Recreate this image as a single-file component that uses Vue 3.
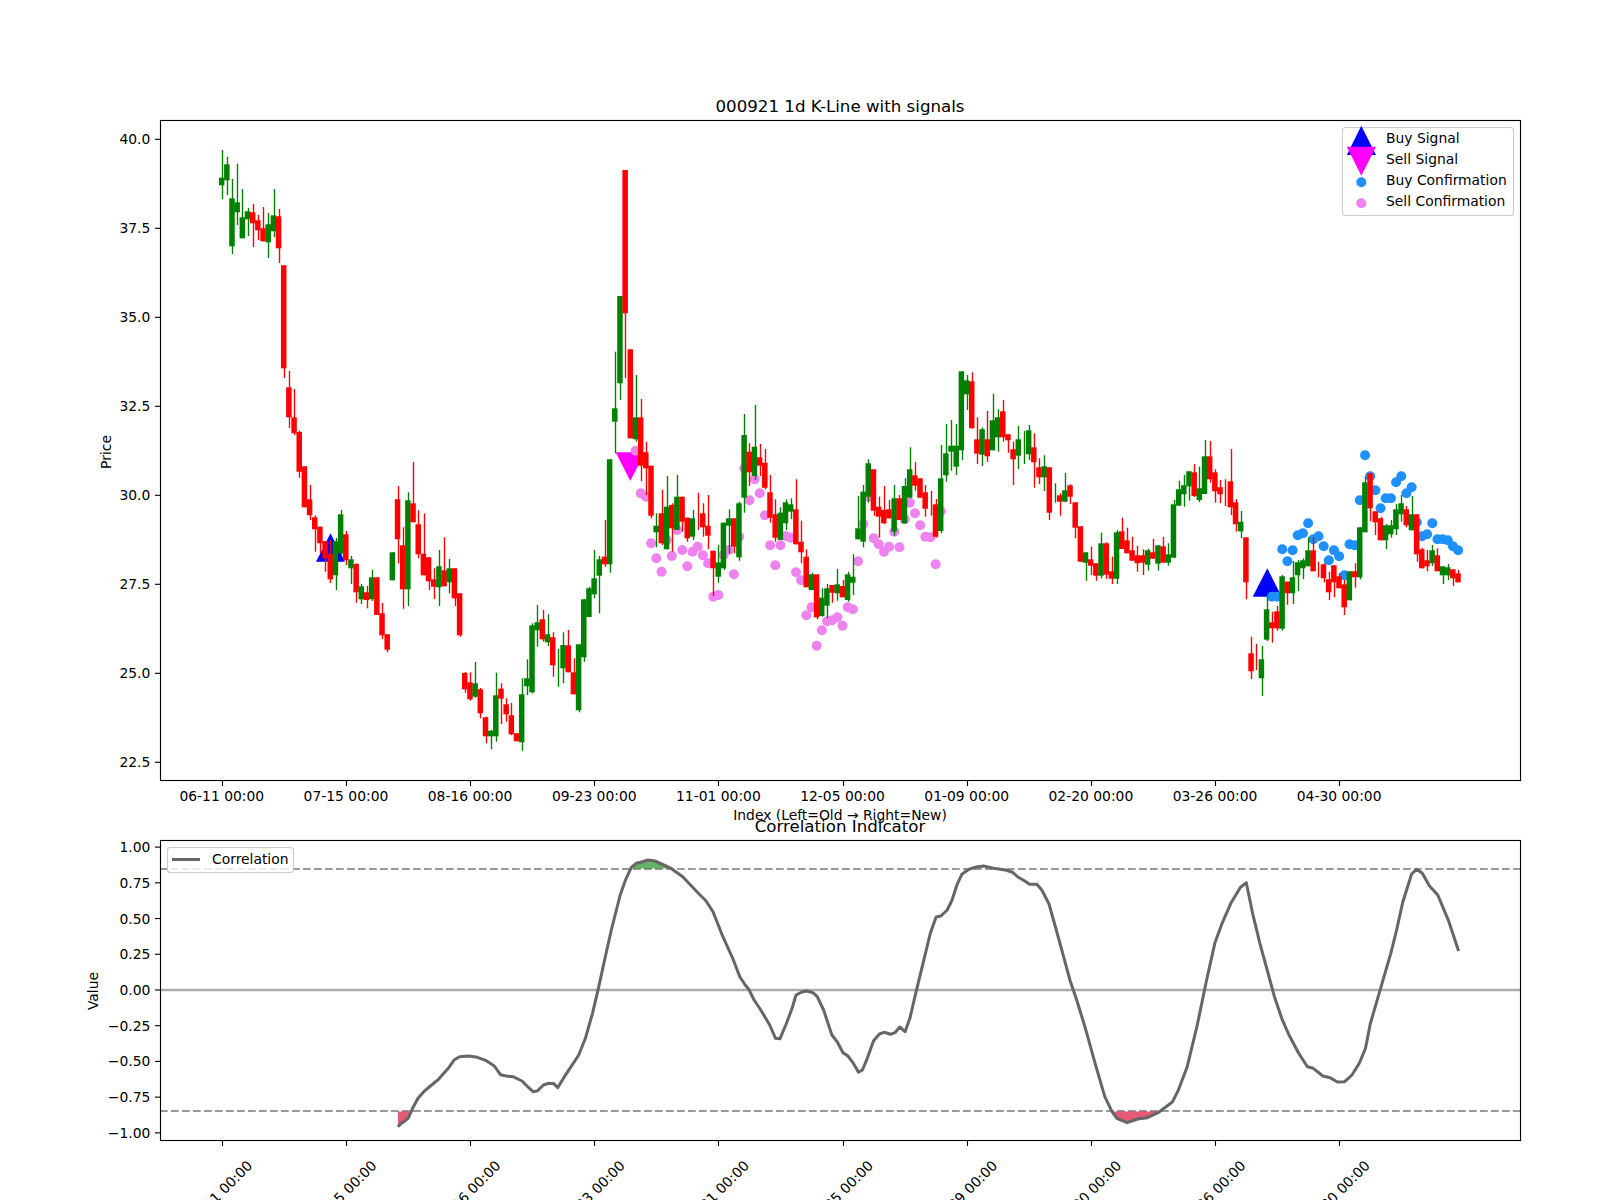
<script setup>
// price panel and indicator panel, values read as pixel rows of the 1600x1200 figure
const barX = (i) => 221.8 + 5.173 * i
const wickX = (i) => Math.round(barX(i)) + 0.5

// color, body top, body bottom, high, low (no body when top is null)
const rows = [
  ['g',177.7,185.3,150,199],['g',164.3,180.3,156.7,195],['g',198.3,246.3,179,254],['g',202.3,212.3,163.7,225],
  ['g',217.3,238.3,189,238.3],['g',211.3,219.3,208,236],['r',212.3,223.3,204,247],['r',220.3,230.3,215,240],
  ['r',228.3,241.3,207,241.3],['g',224.3,242.3,213,258],['g',215.3,231.3,189,237],['r',216.3,248.3,209,263],
  ['r',265.3,368.3,265.3,378],['r',387.3,417.3,371,428],['r',417.3,433.3,389,435],['r',432,471.7,430.7,477.7],
  ['r',466.3,507.3,466.3,507.3],['r',499.3,515.3,485,520],['r',517.3,529.3,515.3,551.7],['r',526.7,543.3,526.7,553],
  ['r',541.3,558.3,541.3,571.7],['r',554,579.3,540,583],['g',541.3,575.3,538,590],['g',514.3,553.3,510,556.7],
  ['r',534.3,560.3,531,565],['g',559.3,568.3,556,584],['r',564,592.3,563.3,602.7],['g',586.3,599.3,584,604],
  ['r',592.3,600,586,608.3],['g',577.3,599.3,570,601],['r',577.3,615,577.3,615],['r',613.3,635.3,603,639],
  ['r',634.3,649.7,634.3,652.3],['g',552.3,580.3,552.3,580.3],['r',499.3,539.3,486,563.3],['r',545.3,589.3,527.3,608.7],
  ['g',500.3,589.3,492.3,606],['r',503.3,522.3,462,522.3],['r',524.3,554.3,510.3,558.3],['r',553.7,575.3,513.3,575.3],
  ['r',557.3,581.3,557.3,590],['r',579.3,586.7,568.3,599],['g',566.3,587.3,550,606],['r',570.3,586.3,537.3,586.3],
  ['g',568.3,582.3,559,593.3],['r',568.3,598.3,568.3,606],['r',593.3,635.3,593.3,636.7],['r',673,689.3,672,692.7],
  ['r',682.3,699.3,672.3,700.7],['g',683.3,696.7,662,697.7],['r',689.3,713.3,688,718.3],['r',717.3,736.3,716.7,743.3],
  ['g',730.7,736.3,730,749.3],['g',695.3,736.3,672.7,741.7],['r',688.7,698.7,683.3,724],['r',704.3,714.3,698.3,721.7],
  ['r',715.3,734.3,703,735],['r',733.3,741.3,733.3,741.3],['g',694.3,742.3,678.3,750.7],['g',678.3,686.3,659.3,695],
  ['g',625.3,692.3,623.3,693.3],['g',622.3,630.3,605,646.7],['r',619.3,639.3,610,641.7],['g',634.3,642.3,614.3,646],
  ['r',637.3,665.3,632.3,676.7],['g',null,null,649,686.7],['g',645,668.3,632.3,683.3],['r',645.3,672.3,630,672.3],
  ['r',672.3,694.3,658.3,694.3],['g',644.3,710.3,644.3,712.3],['g',599.3,657.3,599.3,661.7],['g',588.3,617,586.7,617],
  ['g',578.3,594.3,550,598.3],['g',559.3,575.7,556,613.3],['r',556.7,564.3,520,566.7],['g',459.3,564.3,459.3,572.7],
  ['g',408.3,421.7,351.7,453.3],['g',296,383.3,296,400],['r',170,313.3,170,378.3],['r',349.3,438.3,349.3,438.3],
  ['g',417.3,439.3,375,441.7],['r',417.3,465.7,399,481],['r',452.3,468.3,442,495],['r',465.7,515.7,465.7,518.3],
  ['g',525.7,532.3,513.3,547.3],['r',513.3,543.3,490,545],['g',506.7,549.3,476,549.3],['r',505,528.3,503.3,551.7],
  ['g',496.7,530,475,530],['r',496.7,521.7,496.7,531.7],['r',517.7,538.3,517.7,541.7],['g',518.3,536.7,510,540],
  ['r',null,null,492.7,530],['r',513.3,527.3,503.3,536.7],['r',525.7,535.7,495,549],['r',550.7,568.3,550.7,596],
  ['g',562.3,576.7,545,582.7],['g',522.7,568.3,522.7,570],['g',518.3,525.7,509.3,553.3],['r',518.3,546.7,518.3,553.3],
  ['g',503.3,557.3,501.7,560.7],['g',435,497.7,414,512.7],['r',451.7,472.3,443.3,486],['g',446.7,476,405,480],
  ['r',457.3,465.7,444,476],['r',462.7,487.7,449,489.3],['r',492.3,517.7,475,522.7],['r',514.3,537.7,499.3,541.7],
  ['g',512.7,540,507.3,540],['g',502.3,523.3,499.3,530],['g',504.3,511.7,498.3,519],['r',509.3,544.3,479.3,544.3],
  ['r',541.7,552.3,520.7,563.3],['r',556.7,587.3,549.3,587.3],['g',574.3,590,572.7,590],['r',574.3,617.3,574.3,619.3],
  ['g',597.7,616,588.3,616.7],['g',588.3,605.7,584,618.3],['r',585,592.7,585,602.7],['g',584.3,593.3,569,600.7],
  ['r',586,597.3,580,597.3],['g',574.3,600,571.7,601.7],['g',576.7,582.7,554.3,595],['g',528.3,539.3,496,539.3],
  ['g',491.7,541.7,485,547.3],['g',463.3,496.7,459.3,502.7],['r',469.3,510.7,469.3,515.7],['r',506.7,516.7,496.7,537.7],
  ['r',510,523.3,486,524],['r',509.3,518.3,500,518.3],['g',498.3,531.7,485,535.7],['r',498.3,520,495,520],
  ['g',486,523.3,478.3,523.3],['g',469.3,497.7,447.3,497.7],['r',475.3,485.7,462,490.7],['r',478.3,497.7,478.3,497.7],
  ['r',492.3,508.7,485,516.7],['r',null,null,491,515.7],['r',504.3,536.7,499,537.7],['g',478.3,531,445,533.3],
  ['g',453.3,475.3,424,481.7],['g',445.7,451.7,420,470.7],['g',445.7,466.7,424,475],['g',371.3,450.3,371.3,460],
  ['g',380.3,394.3,375,410],['r',381.3,428.3,372.3,428.3],['r',439.3,453.7,417.3,464],['g',429.3,454.7,427.3,466],
  ['r',439.3,456.3,411,462],['g',420.3,450.3,394,450.3],['g',417.3,437.3,409.3,451.7],['r',411.3,437.3,400,441.7],
  ['r',434.3,440.3,434.3,452.7],['r',449.3,459.3,441.7,485],['g',439.3,455.7,426,469],['g',null,null,431,464],
  ['g',430.3,454.3,425,460],['r',447.3,462.3,433.3,487.7],['r',467.3,477.3,458.3,484],['g',466.3,477.3,455.3,491],
  ['r',467.3,512.7,467.3,520],['g',null,null,483.3,502.7],['r',495.3,501.7,493.3,515.7],['g',490.3,501.7,473,501.7],
  ['r',485.3,496.7,484.3,504],['r',502.3,527.7,502.3,538.3],['r',526.3,561.7,526.3,561.7],['g',552.3,562.7,552.3,580.7],
  ['r',559.3,565.7,546.7,575],['r',563.3,575.7,563.3,580.7],['g',543.3,575.7,532.7,578.3],['r',543.3,574.7,542.3,579],
  ['r',571.3,578.7,556.7,584],['g',532.3,578.7,530,584],['r',531.3,549,517.7,549],['r',540.3,553.3,527.7,553.3],
  ['r',550.3,560.7,536.7,560.7],['r',555.3,563.3,546,571.7],['r',555.3,562.7,549.3,575],['g',550.3,564.7,548.7,570.7],
  ['r',552.3,558.7,539,558.7],['g',545.3,563.7,545.3,570.7],['r',546.3,562.7,537,562.7],['g',554.3,562.7,543.3,565.7],
  ['g',504.3,557.7,500,557.7],['g',489.3,505.7,480.7,505.7],['g',485.3,494.3,475,506.7],['g',471.3,486.3,471.3,500.7],
  ['r',472.3,496,464,497],['g',488.3,500,466.7,502],['g',456.3,494,440,494],['r',456.3,479.3,441,482.7],
  ['r',472.3,491.3,469.3,502.7],['r',487.3,494.3,480,503],['r',null,null,479.3,506],['r',481.3,507.3,449,515],
  ['r',502.3,524.3,499,531.7],['g',521.7,531.3,511,538.3],['r',537.3,582.3,537.3,599.3],['r',653.3,671.3,636.7,679],
  ['r',null,null,644,670],['g',659.3,678.3,646,696],['g',609.3,639.7,596.7,641],['r',622.3,628.3,611.7,642.7],
  ['r',611.3,628.3,606,630.7],['g',576.3,628.7,575,630.7],['r',581.7,593.3,581.7,604.7],['g',577.3,593.3,561,604],
  ['g',562.3,575.3,560,591],['g',560.3,568.3,558.3,579],['g',550.3,566.3,537.3,566.3],['r',550.3,571.3,537.3,571.3],
  ['r',null,null,561.7,577.3],['r',564.3,578.3,563.3,582.3],['r',579.3,592.3,571.7,600],['r',565.3,582.3,565.3,597.3],
  ['r',576.3,588.3,573.3,588.3],['r',584.3,607.3,580,615],['g',571.3,600.3,571.3,600.3],['r',571.3,577.3,563.3,587.7],
  ['g',527.3,577.3,527.3,579.3],['g',482.3,532.3,476.7,532.3],['r',473.3,508.3,473.3,521.3],['r',511.3,522.3,511.3,535],
  ['r',518.3,540.3,517,540.3],['g',525.3,540.3,524,549],['g',525.3,534.3,520,537.7],['g',509.3,529.3,504,535],
  ['g',503.3,514.3,495,521.7],['r',509.3,525.3,506,527.3],['g',514.3,530.3,496,530.3],['r',514.3,554.3,514.3,561.7],
  ['r',549.3,568.3,548,568.3],['r',560.3,566.3,550,571.3],['g',550.3,563.3,545,566],['r',555.3,571.3,548.3,571.3],
  ['g',566.3,575.3,566.3,584],['g',567.3,575.3,564,580],['r',569.3,578.3,569.3,586],['r',573.3,582.3,570,582.3],
]
const bars = rows.map((r, i) => ({
  x: barX(i), wx: wickX(i),
  fill: r[0] === 'g' ? '#008000' : '#ff0000',
  top: r[1], h: r[1] === null ? 0 : r[2] - r[1], hi: r[3], lo: r[4],
}))

const sellY = [450.7,493.3,496.7,543.3,558.3,571.7,540,556,530,550,566.3,551.7,546.7,555.3,563.3,596.7,595,555,550,574.3,
  536.7,468.3,500.3,479.3,493.3,515.3,545.3,565.3,545.3,536,537.7,572.3,580.3,615.3,607.3,645.7,630.3,621.3,620.3,617.3,
  625.7,607.3,609.3,561.3,524.3,496.7,538.3,544.3,551.7,546.7,531.7,547.3,519.3,502.7,513.3,525.3,536.7,537.3,564.3,511.3]
const buyY = [596.7,596.7,549.3,561.3,550.3,535.3,533.3,523.3,539.3,536.3,546.3,560.3,550.3,556.3,575.3,544.3,545.3,500.3,
  455.3,476.3,490.3,508.3,498.3,498.3,482.3,476.3,493.3,487.3,522.3,536.3,534.3,523.3,539.3,539.3,540.3,546.3,550.3]
const sellDots = sellY.map((y, i) => ({ x: barX(i + 80), y }))
const buyDots = buyY.map((y, i) => ({ x: barX(i + 203), y }))

const dates = ['06-11','07-15','08-16','09-23','11-01','12-05','01-09','02-20','03-26','04-30']
const xTicks = dates.map((d, i) => ({ x: barX(i * 24), wx: wickX(i * 24), label: d + ' 00:00' }))

const priceTicks = ['40.0','37.5','35.0','32.5','30.0','27.5','25.0','22.5'].map((label, i) => ({ label, y: 139.3 + i * 89 }))
const valueTicks = ['1.00','0.75','0.50','0.25','0.00','−0.25','−0.50','−0.75','−1.00'].map((label, i) => ({ label, y: 847.1 + i * 35.72 }))

const curve = [[397.9,1126.7],[402.3,1122.7],[408.1,1118.3],[412.6,1108.3],[418,1098.3],[423.8,1091.7],[430.4,1086],[438.5,1079.3],
  [448.3,1068.3],[454.1,1060],[459.5,1056.7],[468.4,1056],[477.3,1057.3],[486.3,1060.7],[494.3,1066],[500.5,1074.7],[506.3,1076],
  [513,1076.7],[522,1081],[528.7,1087.7],[533.1,1091.7],[537.6,1090.7],[543.4,1085],[548.8,1083.3],[554.1,1083.7],[557.7,1087.7],
  [564.4,1076.7],[571.1,1066.7],[578.7,1055],[585.4,1038.3],[592.5,1013.3],[598.8,986.7],[604.6,960],[611.3,930],[620.2,895],
  [625.5,880],[631.3,867.3],[636.3,863.3],[642.5,861.7],[647.9,860],[655,861],[662.6,864.3],[671.5,868.7],[682.7,876.7],[698.3,893.3],
  [705.9,900.7],[713,911.7],[722.9,936.7],[732.7,958.3],[739.8,976.7],[745.2,985],[748.8,989.3],[754.1,1000],[760.8,1010],[769.7,1025],
  [775.5,1038.3],[780,1038.7],[785.8,1025],[792.1,1008.3],[796,995],[801.8,992],[806.7,991],[813,992.7],[817.3,996.7],[823.6,1010],
  [831.9,1035],[837.2,1041.7],[843,1052.7],[847.9,1056],[852.7,1062.3],[858.5,1072.3],[862.4,1070],[867.3,1058.3],[873.6,1040.7],
  [879.4,1034],[884.2,1032.3],[890.5,1034.3],[895.4,1032.3],[899.7,1027],[905.1,1031.7],[909.9,1018.3],[915.7,993.3],[923,963.3],
  [930.3,933.3],[936.1,917],[940.9,916],[947.2,910],[952.1,900],[956.9,885],[961.8,874.3],[969,869.3],[976.3,867],[983.6,866],
  [993.3,868.3],[1005.4,870],[1012.7,872.3],[1017.5,876.7],[1024.8,881],[1029.6,884.3],[1036.9,884.3],[1041.8,890],[1049,904],
  [1056.3,930],[1063.6,956.7],[1069.9,980],[1076.7,1000],[1085.4,1028.3],[1095.1,1063.3],[1104.8,1096.7],[1112,1111.7],[1116.9,1118.3],
  [1127.1,1122.7],[1137.7,1119],[1147.4,1117.7],[1158.1,1112.7],[1165.4,1107.3],[1172.6,1101.7],[1178.4,1090],[1187.2,1066.7],
  [1196.9,1026.7],[1206.6,980],[1214.8,943.3],[1222.1,923.3],[1230.8,903.3],[1240.5,887.3],[1246.3,882.7],[1252.6,913.3],[1259.9,943.3],
  [1267.2,970],[1274.4,996.7],[1281.7,1018.3],[1289,1035],[1298.7,1053.3],[1307.4,1066.7],[1313.2,1068.3],[1322.9,1076],[1330.2,1077.7],
  [1337.4,1082],[1344.7,1081.7],[1352,1075],[1359.3,1063.3],[1365.5,1048.3],[1370.4,1023.3],[1381.1,986.7],[1390.8,953.3],[1396.6,930],
  [1402.9,901.7],[1411.6,874],[1416.5,869.3],[1422.3,873.3],[1429.5,886],[1437.8,895],[1448.9,921.7],[1458.6,951]]
const curvePoints = curve.map((p) => p.join(',')).join(' ')
const greenFill = '631,868.6 631.3,867.3 636.3,863.3 642.5,861.7 647.9,860 655,861 662.6,864.3 671.5,868.6'
const redFill1 = '397.9,1111.4 409,1111.4 409,1117 408.1,1118.3 402.3,1122.7 397.9,1126.7'
const redFill2 = '1112,1111.4 1116.9,1118.3 1127.1,1122.7 1137.7,1119 1147.4,1117.7 1158.1,1112.7 1160,1111.4'
</script>

<template>
  <svg class="figure" width="1600" height="1200" viewBox="0 0 1600 1200">
    <rect width="1600" height="1200" fill="#fff" />

    <!-- price panel -->
    <text class="title" x="840" y="112">000921 1d K-Line with signals</text>
    <polygon points="316,561.7 330.5,533.3 345,561.7" fill="#0000ff" />
    <polygon points="1252.7,596.7 1267.3,568.3 1281.7,596.7" fill="#0000ff" />
    <polygon points="615.7,452.3 645,452.3 630.3,481" fill="#ff00ff" />
    <circle v-for="(d, i) in buyDots" :key="'b' + i" :cx="d.x" :cy="d.y" r="5" fill="#1e90ff" />
    <circle v-for="(d, i) in sellDots" :key="'s' + i" :cx="d.x" :cy="d.y" r="5" fill="#ee82ee" />
    <g v-for="(b, i) in bars" :key="i">
      <line :x1="b.wx" :x2="b.wx" :y1="b.hi" :y2="b.lo" :stroke="b.fill" stroke-width="1.39" />
      <rect v-if="b.h" :x="b.x - 2.9" :y="b.top" width="5.5" :height="b.h" :fill="b.fill" />
    </g>
    <rect class="frame" x="160.5" y="120.5" width="1360" height="660" />
    <g v-for="t in priceTicks" :key="t.label">
      <line class="tick" x1="155" x2="160" :y1="t.y" :y2="t.y" />
      <text class="ylab" x="150.3" :y="t.y + 5">{{ t.label }}</text>
    </g>
    <g v-for="t in xTicks" :key="t.label">
      <line class="tick" :x1="t.wx" :x2="t.wx" y1="781" y2="786" />
      <text class="xlab" :x="t.x" y="801">{{ t.label }}</text>
    </g>
    <text class="xlab" x="840" y="820">Index (Left=Old → Right=New)</text>
    <text class="xlab" transform="translate(111 452) rotate(-90)">Price</text>

    <!-- signal legend -->
    <rect class="legend" x="1342.5" y="127.5" width="171" height="88" rx="3" />
    <polygon points="1346.8,155 1361.3,125.7 1376,155" fill="#0000ff" />
    <polygon points="1346.8,146.7 1376,146.7 1361.3,175.7" fill="#ff00ff" />
    <circle cx="1361.3" cy="182.3" r="5" fill="#1e90ff" />
    <circle cx="1361.3" cy="203.3" r="5" fill="#ee82ee" />
    <text class="ltext" x="1386" y="143">Buy Signal</text>
    <text class="ltext" x="1386" y="164">Sell Signal</text>
    <text class="ltext" x="1386" y="185">Buy Confirmation</text>
    <text class="ltext" x="1386" y="206">Sell Confirmation</text>

    <!-- indicator panel -->
    <text class="title" x="840" y="832">Correlation Indicator</text>
    <line class="zero" x1="160" x2="1520" y1="990" y2="990" />
    <line class="dash" x1="160" x2="1520" y1="869" y2="869" />
    <line class="dash" x1="160" x2="1520" y1="1111" y2="1111" />
    <polygon :points="greenFill" fill="#008000" fill-opacity="0.6" />
    <polygon :points="redFill1" fill="#dc143c" fill-opacity="0.7" />
    <polygon :points="redFill2" fill="#dc143c" fill-opacity="0.7" />
    <polyline class="curve" :points="curvePoints" />
    <rect class="frame" x="160.5" y="840.5" width="1360" height="300" />
    <g v-for="t in valueTicks" :key="t.label">
      <line class="tick" x1="155" x2="160" :y1="t.y" :y2="t.y" />
      <text class="ylab" x="150.3" :y="t.y + 5">{{ t.label }}</text>
    </g>
    <g v-for="t in xTicks" :key="'low' + t.label">
      <line class="tick" :x1="t.wx" :x2="t.wx" y1="1141" y2="1146" />
      <text class="xlab" :transform="`translate(${t.x - 2} 1193) rotate(-45)`" y="5">{{ t.label }}</text>
    </g>
    <text class="xlab" transform="translate(98 991) rotate(-90)">Value</text>

    <rect class="legend" x="167.5" y="847.5" width="126" height="25" rx="3" />
    <line class="curve" x1="172" x2="200" y1="859.5" y2="859.5" />
    <text class="ltext" x="212" y="863.5">Correlation</text>
  </svg>
</template>

<style scoped>
.figure {
  display: block;
  overflow: hidden;
  font-family: "DejaVu Sans", sans-serif;
  font-size: 13.89px;
}

.title {
  font-size: 16.67px;
  text-anchor: middle;
  fill: #000;
}

.frame {
  fill: none;
  stroke: #000;
  stroke-width: 1.11;
}

.tick {
  stroke: #000;
  stroke-width: 1.11;
}

.xlab { text-anchor: middle; fill: #000; }
.ylab { text-anchor: end; fill: #000; }
.ltext { fill: #000; }

.legend {
  fill: #fff;
  fill-opacity: 0.8;
  stroke: #ccc;
  stroke-width: 1.11;
}

.zero {
  stroke: #aaa;
  stroke-width: 2.5;
}

.dash {
  stroke: #999;
  stroke-width: 2.2;
  stroke-dasharray: 7.7 3.3;
}

.curve {
  fill: none;
  stroke: #666;
  stroke-width: 3;
  stroke-linejoin: round;
}
</style>
